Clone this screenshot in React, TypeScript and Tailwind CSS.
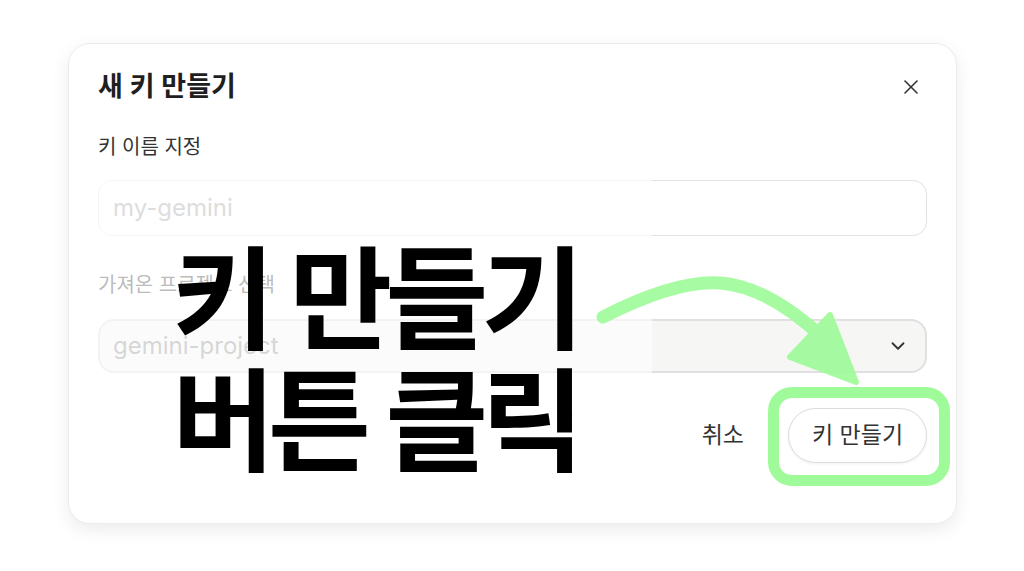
import { X, ChevronDown } from "lucide-react";

const font = { fontFamily: 'Inter, "Noto Sans CJK KR", sans-serif' };

const CreateKeyDialog = () => {
  return (
    <div className="flex h-[481px] w-[889px] flex-col rounded-[22px] border border-[#ececec] bg-white px-[29px] pt-[26px] shadow-[0_6px_18px_rgba(0,0,0,0.08)]">
      <div className="flex items-center justify-between">
        <h2 className="text-[27px] leading-[34px] font-semibold text-[#1f1f1f]">새 키 만들기</h2>
        <button className="mr-[4px] text-[#333]">
          <X size={24} strokeWidth={1.6} />
        </button>
      </div>

      <label className="mt-[30px] text-[20px] leading-[26px] text-[#333]">키 이름 지정</label>
      <div className="mt-[20px] flex h-[56px] items-center rounded-[14px] border border-[#e2e2e2] bg-white px-[14px]">
        <span className="text-[24px] text-[#aaaaaa]">my-gemini</span>
      </div>

      <label className="mt-[36px] text-[20px] leading-[26px] text-[#555]">가져온 프로젝트 선택</label>
      <div className="mt-[21px] flex h-[54px] items-center justify-between rounded-[16px] border-2 border-[#e0e0e0] bg-[#f6f6f4] pr-[16px] pl-[13px]">
        <span className="text-[24px] text-[#9a9a9a]">gemini-project</span>
        <ChevronDown size={22} strokeWidth={2} className="text-[#333]" />
      </div>

      <div className="mt-[35px] flex items-center justify-end gap-[44px]">
        <button className="text-[23px] text-[#333]">취소</button>
        <button className="h-[55px] w-[139px] rounded-full border border-[#dcdcdc] bg-white text-[23px] text-[#333] shadow-[0_1px_3px_rgba(0,0,0,0.06)]">
          키 만들기
        </button>
      </div>
    </div>
  );
};

export default function App() {
  return (
    <div className="relative h-[571px] w-[1024px] overflow-hidden bg-white" style={font}>
      <div className="pt-[43px] pl-[68px]">
        <CreateKeyDialog />
      </div>

      {/* annotation layer */}
      <div className="absolute top-[170px] left-[80px] h-[215px] w-[572px] bg-white/60" />
      <div className="absolute top-[239px] left-[172px] text-[112px] leading-[122px] font-semibold tracking-[-7px] text-black">
        <div>키 만들기</div>
        <div>버튼 클릭</div>
      </div>
      <svg className="absolute top-0 left-0" width="1024" height="571" viewBox="0 0 1024 571">
        <g opacity="0.92">
          <path
            d="M 603 317 C 650 293, 690 281, 720 283 C 760 286, 795 312, 822 337"
            fill="none"
            stroke="#9ffb9a"
            strokeWidth="13"
            strokeLinecap="round"
          />
          <polygon
            points="830,315 790,357 856,382"
            fill="#9ffb9a"
            stroke="#9ffb9a"
            strokeWidth="6"
            strokeLinejoin="round"
          />
        </g>
      </svg>
      <div className="absolute top-[387px] left-[768px] h-[99px] w-[182px] rounded-[24px] border-[11px] border-[#9ffb9a]" />
    </div>
  );
}
